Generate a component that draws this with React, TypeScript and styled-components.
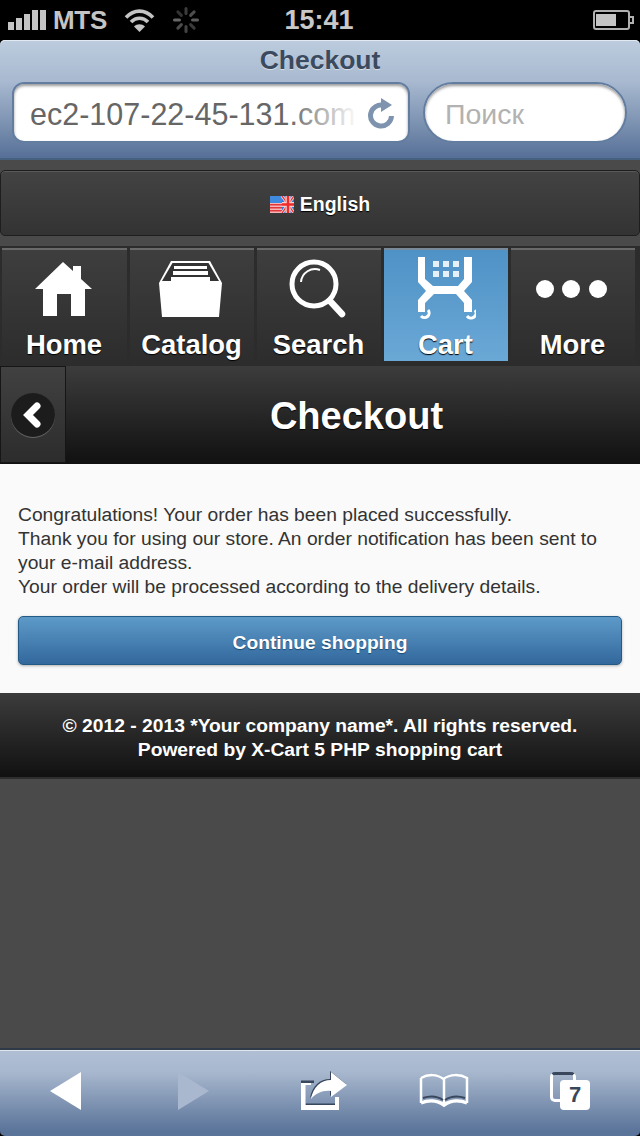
import React from 'react';
import styled, { createGlobalStyle } from 'styled-components';

const GlobalStyle = createGlobalStyle`
  html, body {
    margin: 0;
    padding: 0;
    background: #000;
  }
  body {
    font-family: "Liberation Sans", Arial, sans-serif;
  }
`;

type NavName = 'Home' | 'Catalog' | 'Search' | 'Cart' | 'More';

const HomeIcon = () => (
  <svg width="58" height="54" viewBox="0 0 58 54">
    <path fill="#fff" d="M0 27 L28 0 L38 9 V4 H46 V17 L57 27 H50 V54 H36 V32 H22 V54 H8 V27 Z" />
  </svg>
);

const CatalogIcon = () => (
  <svg width="64" height="56" viewBox="0 0 64 56">
    <path fill="#fff" d="M0 22 L12 0 H51 L63 22 L60 56 H3 Z" />
    <path fill="#333" d="M13.500 2 H49.500 L60 20 H3 Z" />
    <path fill="#fff" d="M15 5 H48 V8 H15 Z M14 10 H49 V14 H14 Z M12 16 H51 V21 H12 Z" />
  </svg>
);

const SearchIcon = () => (
  <svg width="58" height="60" viewBox="0 0 58 60">
    <circle cx="25" cy="25" r="22" fill="none" stroke="#fff" strokeWidth="5" />
    <path d="M12 23 A14 14 0 0 1 31 11" fill="none" stroke="#fff" strokeWidth="2" />
    <path d="M41 42 L53 55" stroke="#fff" strokeWidth="6.500" strokeLinecap="round" />
  </svg>
);

const CartIcon = () => (
  <svg width="62" height="64" viewBox="0 0 62 64">
    <path
      fill="#fff"
      d="M4 0 H11 V22 L19 29 H44 L50 22 V0 H58 V25 L50 34 L58 43 V55 H50 V46 L42 37 H20 L11 46 V55 H4 V43 L12 34 L4 25 Z"
    />
    <path fill="#e6f0f8" d="M19 4 H25 V10 H19 Z M29 4 H35 V10 H29 Z M39 4 H45 V10 H39 Z M19 14 H25 V20 H19 Z M29 14 H35 V20 H29 Z M39 14 H45 V20 H39 Z" />
    <path fill="none" stroke="#fff" strokeWidth="3" d="M14 53 A4.500 4.500 0 0 1 7 59 M61 53 A4.500 4.500 0 0 1 53 59" />
  </svg>
);

const MoreIcon = () => (
  <svg width="72" height="20" viewBox="0 0 72 20">
    <circle cx="9" cy="10" r="9" fill="#fff" />
    <circle cx="35" cy="10" r="9" fill="#fff" />
    <circle cx="62" cy="10" r="9" fill="#fff" />
  </svg>
);

const navItems: Array<{ name: NavName; icon: React.ReactNode; width: number }> = [
  { name: 'Home', icon: <HomeIcon />, width: 125 },
  { name: 'Catalog', icon: <CatalogIcon />, width: 124 },
  { name: 'Search', icon: <SearchIcon />, width: 124 },
  { name: 'Cart', icon: <CartIcon />, width: 124 },
  { name: 'More', icon: <MoreIcon />, width: 124 },
];

export default function App() {
  return (
    <Screen>
      <GlobalStyle />
      <StatusBar>
        <StatusLeft>
          <Signal>
            {[8, 12, 16, 20, 20].map((h, i) => (
              <SignalBar key={i} $height={h} />
            ))}
          </Signal>
          <Carrier>MTS</Carrier>
          <svg width="31" height="25" viewBox="0 0 31 25">
            <path fill="none" stroke="#c4c4c4" strokeWidth="3.600" d="M2 9.500 C10 1 21 1 29 9.500 M7 14 C12 9 19 9 24 14" />
            <path fill="#c4c4c4" d="M15.500 24 L10 18.500 C13 15.500 18 15.500 21 18.500 Z" />
          </svg>
          <svg width="28" height="28" viewBox="0 0 28 28">
            {[0, 45, 90, 135, 180, 225, 270, 315].map((a, i) => (
              <rect
                key={a}
                x="12.500"
                y="1"
                width="3"
                height="8"
                rx="1.500"
                fill={['#3c3c3c', '#4e4e4e', '#5c5c5c', '#3a3a3a', '#444', '#4c4c4c', '#666', '#333'][i]}
                transform={`rotate(${a} 14 14)`}
              />
            ))}
          </svg>
        </StatusLeft>
        <Clock>15:41</Clock>
        <Battery>
          <BatteryLevel />
          <BatteryCap />
        </Battery>
      </StatusBar>

      <BrowserBar>
        <PageTitle>Checkout</PageTitle>
        <BrowserFields>
          <UrlField>
            <UrlText>ec2-107-22-45-131.com</UrlText>
            <UrlFade />
            <svg width="28" height="32" viewBox="0 0 28 32">
              <path fill="none" stroke="#7e93ad" strokeWidth="5" d="M17 8.500 A10.500 10.500 0 1 0 24.500 19" />
              <path fill="#7e93ad" d="M14 1 L25 8 L14 15 Z" />
            </svg>
          </UrlField>
          <SearchField>Поиск</SearchField>
        </BrowserFields>
      </BrowserBar>

      <Page>
        <LanguageButton>
          <svg width="24" height="17" viewBox="0 0 24 17">
            <rect width="12" height="17" fill="#f6b4b4" />
            <path fill="#e0383c" d="M0 8 H12 V9.500 H0 Z M0 11 H12 V12.500 H0 Z M0 14 H12 V15.500 H0 Z" />
            <rect width="12" height="7" fill="#3f8be0" />
            <rect x="12" width="12" height="17" fill="#2c78dc" />
            <path stroke="#f5d0d0" strokeWidth="3" d="M12 0 L24 17 M24 0 L12 17" />
            <path stroke="#f02a2a" strokeWidth="1.200" d="M12 0 L24 17 M24 0 L12 17" />
            <path stroke="#f5d0d0" strokeWidth="5" d="M18 0 V17 M12 8.500 H24" />
            <path stroke="#f02a2a" strokeWidth="2.500" d="M18 0 V17 M12 8.500 H24" />
          </svg>
          English
        </LanguageButton>

        <NavBar>
          {navItems.map((item) => (
            <NavItem key={item.name} $active={item.name === 'Cart'} $width={item.width}>
              <NavIcon>{item.icon}</NavIcon>
              <NavLabel>{item.name}</NavLabel>
            </NavItem>
          ))}
        </NavBar>

        <PageHeader>
          <BackCell>
            <BackCircle>
              <svg width="20" height="26" viewBox="0 0 20 26">
                <path d="M15 4 L6 13 L15 22" fill="none" stroke="#fff" strokeWidth="7" strokeLinecap="round" strokeLinejoin="miter" />
              </svg>
            </BackCircle>
          </BackCell>
          <HeaderTitle>Checkout</HeaderTitle>
        </PageHeader>

        <Content>
          <Message>
            Congratulations! Your order has been placed successfully.
            <br />
            Thank you for using our store. An order notification has been sent to your e-mail address.
            <br />
            Your order will be processed according to the delivery details.
          </Message>
          <ContinueButton>Continue shopping</ContinueButton>
        </Content>

        <Footer>
          © 2012 - 2013 *Your company name*. All rights reserved.
          <br />
          Powered by X-Cart 5 PHP shopping cart
        </Footer>
      </Page>

      <BottomBar>
        <ToolSlot>
          <svg width="32" height="38" viewBox="0 0 32 38">
            <path fill="#fff" d="M32 0 V38 L1 19 Z" />
          </svg>
        </ToolSlot>
        <ToolSlot>
          <svg width="32" height="38" viewBox="0 0 32 38">
            <path fill="#a9b8ce" d="M0 0 V38 L31 19 Z" />
          </svg>
        </ToolSlot>
        <ToolSlot>
          <svg width="48" height="40" viewBox="0 0 48 40">
            <path fill="#39475c" d="M0 9.500 H13 V12 H0 Z M4.500 32.500 H34 V34 H4.500 Z" />
            <path fill="#fff" d="M0 12 H10 V14 H4.500 V34 H34 V26 H38 V39 H0 Z" />
            <path fill="#39475c" d="M30 1 L46 14 L30 26 V20 C22 19 15 22 10 28 C12 16 20 9 30 9 Z" transform="translate(-1 -1)" />
            <path fill="#fff" d="M30 1 L46 14 L30 26 V20 C22 19 15 22 10 28 C12 16 20 9 30 9 Z" />
          </svg>
        </ToolSlot>
        <ToolSlot>
          <svg width="50" height="36" viewBox="0 0 50 36">
            <path fill="none" stroke="#fff" strokeWidth="2.500" d="M2 5 C9 1 18 1 24.500 6 C31 1 41 1 48 5 V30 M2 30 V5 M25 6 V31" />
            <path fill="none" stroke="#39475c" strokeWidth="2" d="M4 25 C10 23 18 23 24 27 M26 27 C32 23 40 23 46 25" />
            <path fill="none" stroke="#fff" strokeWidth="3.500" d="M2 30 C9 27 18 27 25 32 C32 27 41 27 48 30" />
          </svg>
        </ToolSlot>
        <ToolSlot>
          <Tabs>
            <TabsBack />
            <TabsFront>7</TabsFront>
          </Tabs>
        </ToolSlot>
      </BottomBar>
    </Screen>
  );
}

const Screen = styled.div`
  width: 640px;
  height: 1136px;
  display: flex;
  flex-direction: column;
  overflow: hidden;
  background: #000;
`;

const StatusBar = styled.div`
  height: 40px;
  flex: none;
  display: grid;
  grid-template-columns: 1fr auto 1fr;
  align-items: center;
  padding: 0 10px 0 8px;
  background: #000;
`;

const StatusLeft = styled.div`
  display: flex;
  align-items: center;
  gap: 17px;
`;

const Signal = styled.div`
  display: flex;
  align-items: flex-end;
  gap: 2px;
  margin-right: -10px;
`;

const SignalBar = styled.span<{ $height: number }>`
  width: 6px;
  height: ${(props) => props.$height}px;
  background: #c4c4c4;
`;

const Carrier = styled.span`
  font-size: 26px;
  font-weight: 700;
  color: #c4c4c4;
  letter-spacing: -0.3px;
`;

const Clock = styled.span`
  font-size: 27px;
  font-weight: 700;
  color: #c8c8c8;
`;

const Battery = styled.div`
  position: relative;
  justify-self: end;
  width: 37px;
  height: 20px;
  box-sizing: border-box;
  border: 2px solid #b0b0b0;
  border-radius: 3px;
  padding: 2px 1px;
`;

const BatteryLevel = styled.div`
  width: 20px;
  height: 100%;
  background: #c4c4c4;
`;

const BatteryCap = styled.div`
  position: absolute;
  right: -6px;
  top: 4px;
  width: 2px;
  height: 4px;
  border: 2px solid #b0b0b0;
  border-left: none;
`;

const BrowserBar = styled.div`
  height: 120px;
  flex: none;
  box-sizing: border-box;
  padding-top: 4px;
  border-radius: 5px 5px 0 0;
  border-bottom: 2px solid #46607f;
  background: linear-gradient(#bdccde, #a8b9d0 35%, #7d93b2 70%, #566f97);
  box-shadow: inset 0 1px 0 #e2e9f1;
`;

const PageTitle = styled.div`
  text-align: center;
  font-size: 26.500px;
  line-height: 32px;
  font-weight: 700;
  color: #3b4a5e;
  text-shadow: 0 1px 0 rgba(255, 255, 255, 0.5);
`;

const BrowserFields = styled.div`
  display: flex;
  gap: 13px;
  padding: 6px 13px 0 12px;
`;

const UrlField = styled.div`
  position: relative;
  width: 398px;
  height: 61px;
  box-sizing: border-box;
  padding: 3px 13px 0 16px;
  display: flex;
  align-items: center;
  justify-content: space-between;
  gap: 9px;
  background: #fff;
  border: 2px solid #637da0;
  border-radius: 12px;
  box-shadow: inset 0 2px 3px rgba(0, 0, 0, 0.4);

  svg {
    margin-top: -3px;
  }
`;

const UrlText = styled.div`
  flex: 1;
  min-width: 0;
  white-space: nowrap;
  font-size: 30.500px;
  line-height: 40px;
  color: #666;
`;

const UrlFade = styled.div`
  position: absolute;
  right: 50px;
  top: 4px;
  bottom: 4px;
  width: 70px;
  background: linear-gradient(to right, rgba(255, 255, 255, 0), #fff);
`;

const SearchField = styled.div`
  width: 204px;
  height: 61px;
  box-sizing: border-box;
  padding: 3px 0 0 20px;
  display: flex;
  align-items: center;
  background: #fff;
  border: 2px solid #637da0;
  border-radius: 31px;
  box-shadow: inset 0 2px 3px rgba(0, 0, 0, 0.4);
  font-size: 28.500px;
  color: #b2b2b2;
`;

const Page = styled.div`
  flex: 1;
  min-height: 0;
  background: #4a4a4a;
  padding-top: 10px;
`;

const LanguageButton = styled.div`
  height: 66px;
  box-sizing: border-box;
  display: flex;
  align-items: center;
  justify-content: center;
  gap: 6px;
  padding-top: 2px;
  border: 1px solid #1e1e1e;
  border-radius: 5px;
  background: linear-gradient(#434343, #333);
  box-shadow: inset 0 1px 0 #5a5a5a;
  font-size: 19.500px;
  font-weight: 700;
  color: #fff;
  text-shadow: 0 1px 1px #000;
`;

const NavBar = styled.div`
  margin-top: 10px;
  height: 120px;
  display: flex;
  gap: 3px;
  padding: 2px 0 0 2px;
  box-sizing: border-box;
  background: #2c2c2c;
`;

const NavItem = styled.div<{ $active: boolean; $width: number }>`
  width: ${(props) => props.$width}px;
  height: ${(props) => (props.$active ? '113px' : '118px')};
  flex: none;
  box-sizing: border-box;
  display: flex;
  flex-direction: column;
  align-items: center;
  color: #fff;
  border-top: 2px solid ${(props) => (props.$active ? '#7a8a98' : '#6a6a6a')};
  background: ${(props) =>
    props.$active ? 'linear-gradient(#4f92c6, #6aa8d6)' : 'linear-gradient(#3e3e3e, #2c2c2c)'};
`;

const NavIcon = styled.div`
  height: 72px;
  display: flex;
  align-items: center;
  justify-content: center;
  flex: none;
  padding: 6px 2px 0 0;
  box-sizing: border-box;
`;

const NavLabel = styled.div`
  font-size: 27.400px;
  line-height: 32px;
  font-weight: 700;
  margin: 7px 1px 0 0;
  text-shadow: 0 1px 1px #000;
`;

const PageHeader = styled.div`
  height: 98px;
  box-sizing: border-box;
  display: flex;
  border-bottom: 1px solid #111;
  background: linear-gradient(#3c3c3c, #111);
`;

const BackCell = styled.div`
  width: 66px;
  flex: none;
  box-sizing: border-box;
  display: flex;
  align-items: center;
  justify-content: center;
  border: 1px solid #161616;
  background: linear-gradient(#414141, #2c2c2c);
`;

const BackCircle = styled.div`
  width: 44px;
  height: 44px;
  border-radius: 50%;
  display: flex;
  align-items: center;
  justify-content: center;
  background: #1c1c1c;
  box-shadow: 0 1px 0 #666;
  padding-right: 2px;
  box-sizing: border-box;
`;

const HeaderTitle = styled.div`
  flex: 1;
  text-align: center;
  line-height: 100px;
  font-size: 38px;
  font-weight: 700;
  color: #fff;
  padding-left: 7px;
  text-shadow: 0 1px 1px #000;
`;

const Content = styled.div`
  height: 229px;
  box-sizing: border-box;
  padding: 39px 18px 0;
  background: #fafafa;
`;

const Message = styled.div`
  font-size: 19.250px;
  line-height: 24px;
  color: #333;
`;

const ContinueButton = styled.div`
  margin-top: 17px;
  height: 49px;
  box-sizing: border-box;
  display: flex;
  align-items: center;
  justify-content: center;
  padding-top: 4px;
  border: 1px solid #225a85;
  border-radius: 5px;
  background: linear-gradient(#5d9ac8, #33689d);
  box-shadow: 0 1px 3px rgba(0, 0, 0, 0.3);
  font-size: 19.200px;
  font-weight: 700;
  color: #fff;
  text-shadow: 0 1px 1px #1d4a70;
`;

const Footer = styled.div`
  height: 86px;
  box-sizing: border-box;
  padding-top: 21px;
  text-align: center;
  font-size: 19.250px;
  line-height: 24px;
  font-weight: 700;
  color: #fff;
  border-bottom: 2px solid #2e2e2e;
  background: linear-gradient(#3c3c3c, #111);
`;

const BottomBar = styled.div`
  height: 88px;
  flex: none;
  box-sizing: border-box;
  display: grid;
  grid-template-columns: 129px 129px 134px 104px 144px;
  align-items: center;
  border-top: 2px solid #2f3a49;
  border-radius: 0 0 5px 5px;
  background: linear-gradient(#b0bfd4, #a8b8ce 25%, #5a7399 95%);
  box-shadow: inset 0 1px 0 #dfe6ee;
`;

const ToolSlot = styled.div`
  display: flex;
  justify-content: center;
  align-items: center;
  padding-bottom: 4px;
`;

const Tabs = styled.div`
  position: relative;
  width: 40px;
  height: 38px;
  margin-left: 4px;
`;

const TabsBack = styled.div`
  position: absolute;
  left: 0;
  top: 0;
  width: 26px;
  height: 30px;
  box-sizing: border-box;
  border: 3px solid #fff;
  border-top-color: #39475c;
  border-radius: 5px;
`;

const TabsFront = styled.div`
  position: absolute;
  right: 0;
  bottom: 0;
  width: 30px;
  height: 30px;
  border-radius: 4px;
  background: #fff;
  color: #39475c;
  font-size: 22px;
  font-weight: 700;
  display: flex;
  align-items: center;
  justify-content: center;
`;
